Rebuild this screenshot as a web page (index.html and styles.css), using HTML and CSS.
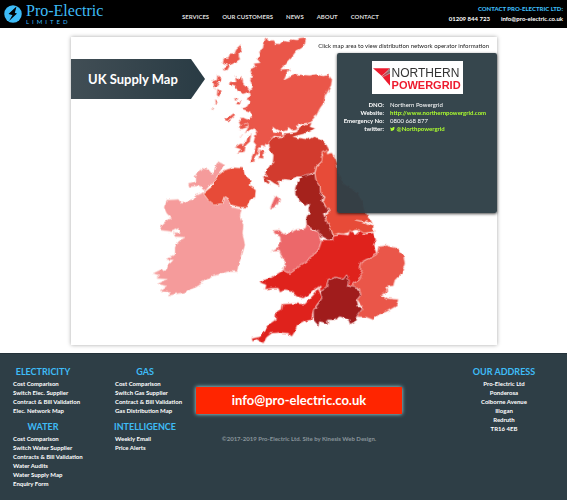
FILE: index.html
```html
<!DOCTYPE html>
<html lang="en">
<head>
<meta charset="utf-8">
<title>UK Supply Map - Pro-Electric</title>
<link rel="stylesheet" href="styles.css">
</head>
<body>
<header class="top">
  <a class="logo" href="#">
    <svg class="logo-mark" viewBox="0 0 36 36" aria-hidden="true"><circle cx="18" cy="18" r="17.5" fill="#3ebcf7"/><path d="M25 3 9 18l8 1-6 0 14-1-4 0z" fill="#000"/><path d="M24 5 10 18l7 2-7 12 16-15-7-2z" fill="#000"/></svg>
    <span class="logo-text"><span class="logo-name">Pro-Electric</span><span class="logo-sub">LIMITED</span></span>
  </a>
  <nav class="menu"><a href="#">SERVICES</a><a href="#">OUR CUSTOMERS</a><a href="#">NEWS</a><a href="#">ABOUT</a><a href="#">CONTACT</a></nav>
  <div class="contact">
    <strong>CONTACT PRO-ELECTRIC LTD:</strong>
    <div class="contact-row"><a href="#">01209 844 723</a><a href="#">info@pro-electric.co.uk</a></div>
  </div>
</header>
<main>
  <section class="panel">
    <svg class="map" viewBox="213 111 1278 924" role="img" aria-label="Map of supply regions">
      <defs><filter id="coast" x="-5%" y="-5%" width="110%" height="110%"><feTurbulence type="fractalNoise" baseFrequency=".06" numOctaves="2" seed="4"/><feDisplacementMap in="SourceGraphic" scale="11" xChannelSelector="R" yChannelSelector="G"/></filter></defs>
      <g class="regions" filter="url(#coast)">
        <g transform="translate(450 450)">
          <path fill="#f59b9b" d="M50 150 85 148 95 160 125 152 135 138 155 130 165 120 150 108 118 110 115 100 135 95 135 80 142 65 160 55 175 58 185 70 192 65 198 45 205 35 225 45 215 62 200 80 198 95 180 105 160 130 175 150 200 165 215 160 222 140 238 150 245 172 275 178 270 200 280 225 278 250 285 285 275 320 265 345 262 365 235 365 190 378 165 392 145 405 130 415 105 428 75 432 55 438 62 425 30 422 50 408 22 402 52 388 20 385 30 375 10 370 30 360 50 358 55 345 70 330 48 328 75 312 75 295 85 275 105 262 75 260 70 248 95 248 85 235 65 245 30 240 35 225 50 210 65 205 50 190 42 172z"/>
          <path fill="#e74b37" d="M160 130 185 110 195 90 205 75 225 60 250 52 280 55 285 75 302 90 300 110 318 120 315 145 300 150 290 172 270 172 245 165 235 145 222 140 215 160 195 165 175 150z"/>
        </g>
        <g transform="translate(450 90)">
          <path fill="#ea564a" d="M345 28 352 24 358 32 368 30 375 40 388 42 400 32 418 35 425 28 440 30 448 24 468 22 466 40 455 55 440 62 430 75 418 88 392 118 420 116 412 128 402 150 425 138 440 132 455 134 480 136 500 132 520 138 535 134 546 148 544 165 535 182 525 200 522 218 510 235 500 255 490 270 480 278 465 280 445 285 440 300 428 302 415 292 408 302 395 305 380 298 370 290 368 302 390 308 402 318 385 320 372 318 362 330 352 340 345 350 335 345 328 355 325 368 315 380 313 398 302 400 305 380 312 365 318 345 310 335 318 310 312 295 300 300 285 310 295 290 270 292 265 280 278 262 292 268 305 262 300 245 272 236 290 230 300 215 290 205 302 198 298 185 280 192 262 182 255 170 240 165 242 155 258 155 255 138 268 148 276 140 280 160 292 170 300 182 308 170 300 150 305 135 300 118 315 110 312 100 330 98 320 85 328 78 325 65 338 55 340 45z"/>
          <path fill="#ea564a" d="M274 42 274 62 266 74 270 88 252 100 240 106 233 120 224 122 222 112 233 105 218 98 222 84 235 82 240 70 252 70 258 56zM202 136 214 145 212 154 202 158 206 168 194 170 196 180 188 154 200 150zM202 176 212 182 207 204 200 198zM196 208 204 214 198 224zM186 232 192 236 186 240zM225 270 250 250 256 254 236 274zM253 204 265 206 256 214zM258 222 273 210 270 224zM265 290 292 278 295 291 275 298zM304 310 300 335 288 346 284 365 262 368 272 358 255 352 272 340 278 348 288 328zM330 358 342 366 340 386 326 384zM273 320 278 312 270 324z"/>
          <path fill="#d23b2f" d="M358 350 355 335 370 322 400 320 402 310 425 308 440 306 448 292 465 282 485 278 480 290 495 295 480 305 460 312 430 320 455 325 475 328 490 320 510 325 520 335 530 345 538 360 530 368 522 362 515 375 525 385 515 395 500 408 495 428 480 432 470 440 440 440 420 450 400 448 385 455 388 468 372 460 355 448 360 465 345 455 338 435 350 440 345 425 360 410 368 395 370 375 360 362z"/>
        </g>
        <g transform="translate(720 390)">
          <path fill="#a5211f" d="M178 148 190 138 215 132 225 130 228 150 240 165 242 185 250 200 245 212 260 235 272 240 250 250 258 270 270 290 280 320 278 332 262 330 240 318 225 300 200 290 198 265 208 250 205 235 210 220 195 228 180 215 165 190 165 175 170 160z"/>
          <path fill="#e74b37" d="M225 130 230 110 245 95 248 75 245 65 260 60 262 72 275 68 285 85 292 100 295 130 310 160 350 185 365 210 375 245 390 265 398 282 380 275 345 270 365 274 400 290 402 305 370 310 350 300 335 305 310 312 295 310 280 316 270 290 258 270 255 255 272 240 260 235 248 212 252 198 242 185 240 165 228 150z"/>
          <path fill="#ec686a" d="M112 197 120 205 114 222 100 234 90 235 98 216 104 202z"/>
        </g>
        <g transform="translate(720 660)">
          <path fill="#ec686a" d="M120 50 105 42 98 32 118 30 130 42 150 38 170 28 195 25 200 15 215 28 240 38 245 62 238 82 232 98 210 112 200 125 180 138 165 150 150 160 130 150 135 125 125 110 118 90 95 92 115 80 122 65z"/>
          <path fill="#df221e" d="M245 62 278 62 280 45 300 42 325 45 330 30 345 45 360 32 375 42 400 38 408 60 400 75 408 95 410 103 395 112 380 118 362 128 358 145 368 160 358 180 340 190 330 205 320 165 310 178 290 172 265 178 258 205 240 215 240 198 225 208 210 222 190 235 170 230 155 215 130 212 120 218 115 205 95 205 75 208 78 195 60 188 65 182 95 172 130 150 150 160 165 150 180 138 200 125 210 112 232 98 238 82z"/>
          <path fill="#ea564a" d="M410 103 415 80 440 76 470 84 490 105 495 130 485 160 465 180 460 198 440 200 445 212 425 225 440 235 475 238 470 258 440 275 415 285 400 300 380 292 350 290 368 265 350 240 362 225 358 205 330 205 340 190 358 180 368 160 358 145 362 128 380 118 395 112z"/>
          <path fill="#a01b1e" d="M265 178 290 172 310 178 320 165 328 185 325 198 358 208 362 225 350 240 355 260 368 265 350 290 345 305 330 313 325 300 300 290 280 300 262 300 265 312 240 305 235 318 220 300 220 270 232 255 245 235 240 215 258 205z"/>
          <path fill="#df221e" d="M240 198 235 212 245 235 230 255 220 270 215 300 195 305 172 318 165 335 155 350 145 340 120 338 95 340 80 352 70 370 50 358 38 365 35 355 60 350 75 330 90 310 105 300 108 275 125 268 128 252 165 250 195 252 205 240 220 225z"/>
        </g>
      </g>
    </svg>
    <h1 class="title">UK Supply Map</h1>
    <div class="side">
      <p class="hint">Click map area to view distribution network operator information</p>
      <div class="operator">
        <div class="brand">
          <svg class="brand-mark" viewBox="0 0 52 54" aria-hidden="true"><defs><linearGradient id="shade"><stop stop-color="#ed1b2e"/><stop offset="1" stop-color="#777"/></linearGradient></defs><path d="M0 0H52L27 24z" fill="#ed1b2e"/><path d="M27 24 52 0V20L32 30z" fill="url(#shade)"/><path d="M31 29 52 16V54z" fill="#ed1b2e"/><path d="M26 24 52 5M29 27 52 15" stroke="#fff" stroke-width="1"/></svg>
          <span class="brand-text"><span>NORTHERN</span><b>POWERGRID</b></span>
        </div>
        <dl class="details">
          <dt>DNO:</dt><dd>Northern Powergrid</dd>
          <dt>Website:</dt><dd><a href="#">http://www.northernpowergrid.com</a></dd>
          <dt>Emergency No:</dt><dd>0800 668 877</dd>
          <dt>twitter:</dt><dd><a href="#"><svg class="bird" viewBox="0 0 24 20" aria-hidden="true"><path fill="currentColor" d="M24 2.4a10 10 0 0 1-2.8.8A5 5 0 0 0 23.300.5a10 10 0 0 1-3.100 1.200A4.900 4.900 0 0 0 11.800 6.200 14 14 0 0 1 1.700 1a4.900 4.900 0 0 0 1.500 6.600A5 5 0 0 1 1 7c0 2.400 1.700 4.400 3.900 4.900a5 5 0 0 1-2.200.1 4.900 4.900 0 0 0 4.600 3.400A10 10 0 0 1 0 17.500 14 14 0 0 0 21.500 5 10 10 0 0 0 24 2.400z"/></svg> @Northpowergrid</a></dd>
        </dl>
      </div>
    </div>
  </section>
</main>
<footer class="footer">
  <div class="links">
    <section><h2>ELECTRICITY</h2><ul><li><a href="#">Cost Comparison</a></li><li><a href="#">Switch Elec. Supplier</a></li><li><a href="#">Contract &amp; Bill Validation</a></li><li><a href="#">Elec. Network Map</a></li></ul></section>
    <section><h2>GAS</h2><ul><li><a href="#">Cost Comparison</a></li><li><a href="#">Switch Gas Supplier</a></li><li><a href="#">Contract &amp; Bill Validation</a></li><li><a href="#">Gas Distribution Map</a></li></ul></section>
    <section><h2>WATER</h2><ul><li><a href="#">Cost Comparison</a></li><li><a href="#">Switch Water Supplier</a></li><li><a href="#">Contracts &amp; Bill Validation</a></li><li><a href="#">Water Audits</a></li><li><a href="#">Water Supply Map</a></li><li><a href="#">Enquiry Form</a></li></ul></section>
    <section><h2>INTELLIGENCE</h2><ul><li><a href="#">Weekly Email</a></li><li><a href="#">Price Alerts</a></li></ul></section>
  </div>
  <div class="middle">
    <a class="email" href="#">info@pro-electric.co.uk</a>
    <p class="copyright">©2017-2019 Pro-Electric Ltd. Site by Kinesis Web Design.</p>
  </div>
  <address class="address"><h2>OUR ADDRESS</h2>Pro-Electric Ltd<br>Ponderosa<br>Colborne Avenue<br>Illogan<br>Redruth<br>TR16 4EB</address>
</footer>
</body>
</html>
```
FILE: styles.css
```css
* { box-sizing: border-box; }
body {
  margin: 0;
  min-height: 100vh;
  display: flex;
  flex-direction: column;
  background: #fff;
  font-family: Lato, "Noto Sans", sans-serif;
  font-size: 6px;
  line-height: 9px;
}
a { color: inherit; text-decoration: none; }
h1, h2, p, ul, dl, dd { margin: 0; padding: 0; }

.top {
  height: 28px;
  display: grid;
  grid-template-columns: 178px 1fr auto;
  padding: 0 4px;
  background: #000;
  color: #fff;
}
.logo { display: flex; gap: 4px; padding-top: 3px; color: #3ebcf7; }
.logo-mark { width: 18px; height: 18px; margin-top: 2px; }
.logo-text { display: flex; flex-direction: column; }
.logo-name { font: 16px/16px "Liberation Serif", serif; }
.logo-sub { font-size: 6px; line-height: 6px; letter-spacing: 3px; }
.menu { display: flex; gap: 13px; padding-top: 12px; color: #ddd; font-weight: bold; }
.contact { padding-top: 4px; text-align: right; font-weight: bold; line-height: 10px; }
.contact strong { color: #3ebcf7; }
.contact-row { display: flex; justify-content: flex-end; gap: 11px; }

.panel {
  display: grid;
  grid-template-columns: 62% 38%;
  margin: 9px 70px 8px 71px;
  background: #fff;
  box-shadow: 0 0 4px rgba(0, 0, 0, .35);
}
.map { grid-area: 1 / 1 / 2 / 3; display: block; width: 100%; }
.regions path { stroke: #fbd5d0; stroke-width: 2; }
.title {
  grid-area: 1 / 1;
  position: relative;
  align-self: start;
  justify-self: start;
  width: 134px;
  margin-top: 22px;
  padding: 0 0 0 17px;
  font-size: 13px;
  line-height: 40px;
  color: #fff;
  background: linear-gradient(90deg, #414e55, #293b44);
  clip-path: polygon(0 0, 120px 0, 100% 50%, 120px 100%, 0 100%);
}
.side { grid-area: 1 / 2; position: relative; }
.hint { padding: 4px 8px 3px 0; white-space: nowrap; display: flex; justify-content: flex-end; color: #222; }
.operator {
  height: 160px;
  margin-left: 2px;
  padding-top: 8px;
  border-radius: 2px;
  background: rgba(46, 62, 70, .96);
  box-shadow: 0 1px 3px rgba(0, 0, 0, .7);
  color: #fff;
}
.brand { display: flex; align-items: flex-start; gap: 2px; width: 91px; height: 33px; margin: 0 auto; padding: 6px 0 0 1px; background: #fff; }
.brand-mark { width: 17px; height: 18px; flex: none; margin-top: 1px; }
.brand-text { display: flex; flex-direction: column; font: 12px/12px "Liberation Sans", sans-serif; color: #333; }
.brand-text b { font-size: 11px; line-height: 12px; color: #ed1b2e; }
.details { display: grid; grid-template-columns: 47px 1fr; column-gap: 6px; line-height: 8px; margin-top: 7px; }
.details dt { text-align: right; font-weight: bold; }
.details a { color: #adff2f; font-weight: bold; }
.bird { width: 5px; height: 4px; }

.footer {
  flex: 1;
  display: grid;
  grid-template-columns: 176px 206px 1fr;
  column-gap: 7px;
  padding: 13px 0 10px 13px;
  background: #2e3e46;
  border-top: 1px solid #24323a;
  color: #fff;
  font-weight: bold;
}
.footer h2 { font-size: 9px; line-height: 10px; margin-bottom: 2px; color: #3ebcf7; }
.links { display: grid; grid-template-columns: 60px 60px; column-gap: 42px; row-gap: 7px; align-content: start; white-space: nowrap; }
.links h2 { display: flex; justify-content: center; }
.links ul { list-style: none; }
.email {
  display: block;
  margin-top: 20px;
  line-height: 27px;
  text-align: center;
  font-size: 13px;
  background: #ff2500;
  box-shadow: 0 0 4px #a9e8ee;
}
.copyright { margin-top: 20px; text-align: center; color: #89949a; }
.address { font-style: normal; text-align: center; padding-left: 32px; }
.address h2 { white-space: nowrap; }
```
